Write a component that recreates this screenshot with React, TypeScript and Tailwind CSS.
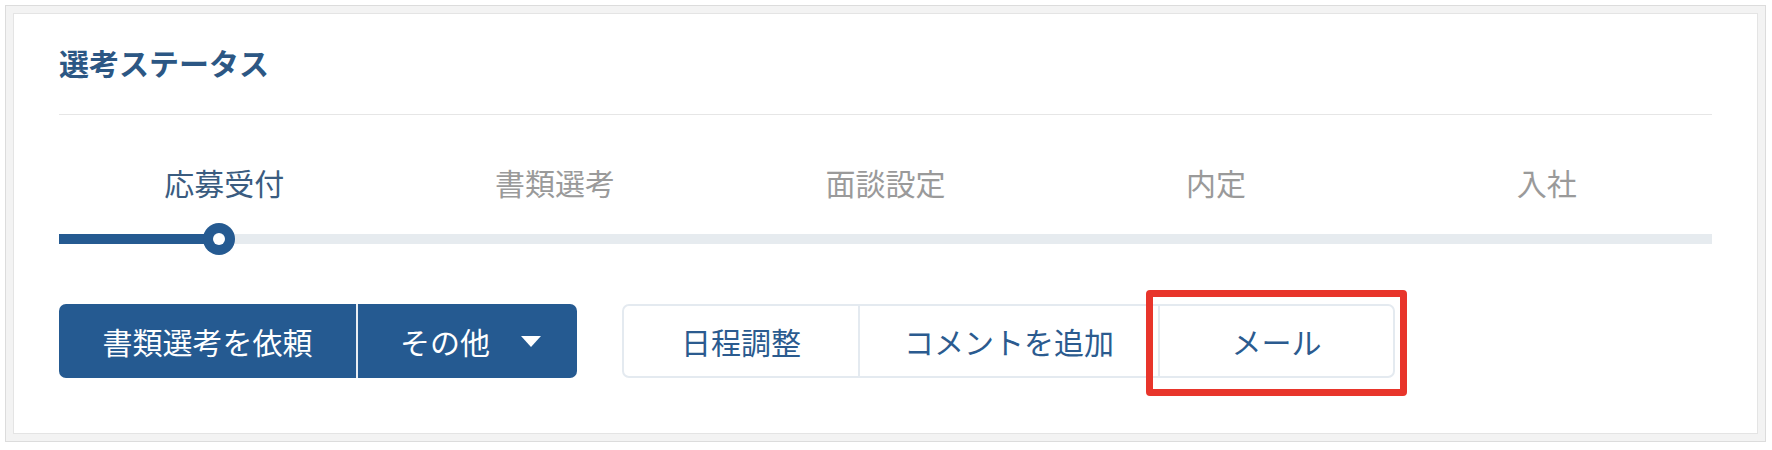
import React from "react";

const steps = ["応募受付", "書類選考", "面談設定", "内定", "入社"];

export default function App() {
  return (
    <div
      className="relative w-[1772px] h-[450px] bg-white pt-[5px] pl-[5px]"
      style={{ fontFamily: '"Noto Sans CJK JP", "Noto Sans", sans-serif' }}
    >
      <div className="w-[1761px] border border-[#dcdcdc] bg-[#f3f3f3] p-[7px]">
        <div className="border border-[#e4e4e4] bg-white px-[45px] pt-[33px] pb-[55px]">
          <h2 className="text-[30px] leading-[30px] font-bold text-[#2c5784]">選考ステータス</h2>
          <div className="mt-[37px] h-px bg-[#e6e6e6]" />

          <div className="mt-[52px] grid grid-cols-5">
            {steps.map((s, i) => (
              <div
                key={s}
                className={
                  i === 0
                    ? "text-center text-[30px] leading-[30px] text-[#3a5c80]"
                    : "text-center text-[30px] leading-[30px] text-[#9a9a9a]"
                }
              >
                {s}
              </div>
            ))}
          </div>

          <div className="relative mt-[37px] h-[10px] bg-[#e6ebef]">
            <div className="absolute left-0 top-0 h-[10px] w-[160px] bg-[#255a91]" />
            <div className="absolute left-[144px] top-[-11px] flex h-[32px] w-[32px] items-center justify-center rounded-full bg-[#255a91]">
              <div className="h-[12px] w-[12px] rounded-full bg-white" />
            </div>
          </div>

          <div className="mt-[60px] flex items-stretch">
            <div className="flex h-[74px] overflow-hidden rounded-[7px] bg-[#255a91] text-white">
              <button className="flex w-[297px] items-center justify-center text-[30px] leading-[30px] text-white">
                書類選考を依頼
              </button>
              <button className="flex w-[221px] items-center border-l-2 border-[#e9eef4] pl-[42px] text-[30px] leading-[30px] text-white">
                <span>その他</span>
                <svg className="ml-[31px]" width="20" height="11" viewBox="0 0 20 11">
                  <polygon points="0,0 20,0 10,11" fill="#ffffff" />
                </svg>
              </button>
            </div>

            <div className="ml-[45px] flex h-[74px] rounded-[7px] border-2 border-[#e4eaf0] bg-white">
              <button className="flex w-[234px] items-center justify-center text-[30px] leading-[30px] text-[#2b5b8f]">
                日程調整
              </button>
              <button className="flex w-[300px] items-center justify-center border-l-2 border-[#e4eaf0] text-[30px] leading-[30px] text-[#2b5b8f]">
                コメントを追加
              </button>
              <button className="flex w-[235px] items-center justify-center border-l-2 border-[#e4eaf0] text-[30px] leading-[30px] text-[#2b5b8f]">
                メール
              </button>
            </div>
          </div>
        </div>
      </div>

      <div className="pointer-events-none absolute left-[1146px] top-[290px] h-[106px] w-[261px] rounded-[4px] border-[7px] border-[#e8352b]" />
    </div>
  );
}
